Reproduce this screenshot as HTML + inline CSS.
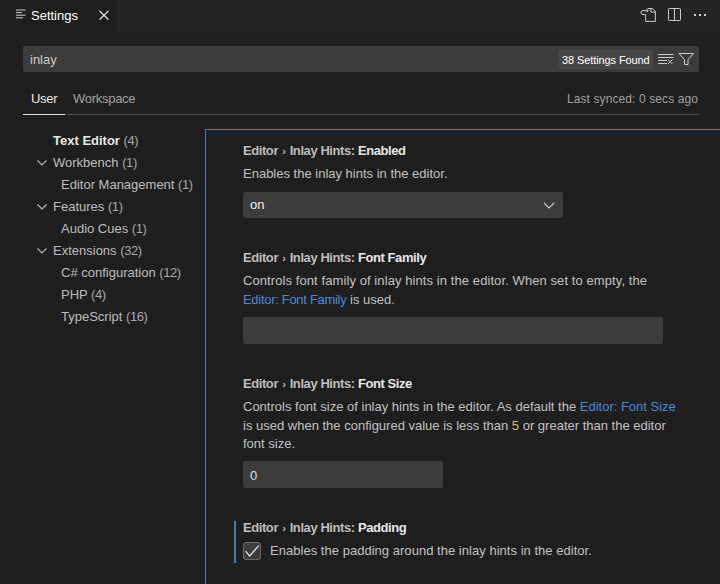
<!DOCTYPE html>
<html><head><meta charset="utf-8">
<style>
*{box-sizing:border-box;margin:0;padding:0}
html,body{width:720px;height:584px;overflow:hidden;background:#1e1e1e;font-family:"Liberation Sans",sans-serif;color:#cccccc;position:relative}
.a{position:absolute;white-space:nowrap}
#tabbar{left:0;top:0;width:720px;height:32px;background:#252526}
#tab{left:0;top:0;width:118px;height:32px;background:#1e1e1e}
.t13{font-size:13px;line-height:16px}
.title{font-size:13px;font-weight:bold;color:#bdbdbd;letter-spacing:-0.42px}
.title b{color:#e7e7e7}
.sep{font-size:11px;font-weight:bold;position:relative;top:-0.5px;padding:0 1px}
.desc{font-size:13px;color:#c2c2c2;line-height:18.5px}
.link{color:#4b8ad8}
.toc{font-size:13px;color:#bdbdbd}
.toc .n{color:#a8a8a8;letter-spacing:-0.4px}
.input{background:#3c3c3c;border-radius:2px}
</style></head><body>
<div class="a" id="tabbar"></div>
<div class="a" id="tab"></div>
<!-- tab icon -->
<svg class="a" style="left:15px;top:8px" width="12" height="12" viewBox="0 0 12 12">
<g fill="#cccccc"><rect x="1" y="1.5" width="9.5" height="1"/><rect x="1" y="4.1" width="6" height="1"/><rect x="1" y="6.7" width="9.5" height="1"/><rect x="1" y="9.3" width="7" height="1"/></g>
</svg>
<div class="a t13" style="left:31px;top:8px;color:#ffffff">Settings</div>
<!-- close -->
<svg class="a" style="left:98px;top:9px" width="12" height="12" viewBox="0 0 12 12">
<path d="M1.5 1.9L10.5 10.6M10.5 1.9L1.5 10.6" stroke="#ffffff" stroke-width="1.15"/>
</svg>
<!-- right icons -->
<svg class="a" style="left:636px;top:4px" width="26" height="22" viewBox="0 0 26 22">
<g fill="none" stroke="#cccccc" stroke-width="1">
<path d="M9.6 10V17.4H19.4V7.6L16.4 4.5H11.6"/>
<path d="M14.9 4.5V8.1H19.4"/>
<path d="M12 6.6H7A2 2 0 0 0 7 10.6H9.6"/>
<path d="M10.4 4.8L12.2 6.6L10.4 8.4"/>
</g>
</svg>
<svg class="a" style="left:666px;top:7px" width="17" height="16" viewBox="0 0 17 16">
<g fill="none" stroke="#cccccc" stroke-width="1">
<rect x="2.5" y="1.5" width="12" height="12" rx="0.8"/>
<path d="M8.5 1.5V13.5"/>
</g>
</svg>
<svg class="a" style="left:692px;top:12px" width="16" height="6" viewBox="0 0 16 6">
<g fill="#cccccc"><rect x="2" y="2" width="2" height="2"/><rect x="7" y="2" width="2" height="2"/><rect x="12" y="2" width="2" height="2"/></g>
</svg>

<!-- search -->
<div class="a input" style="left:23px;top:46px;width:676px;height:26px"></div>
<div class="a t13" style="left:30px;top:52px;color:#cccccc">inlay</div>
<div class="a" style="left:559px;top:50px;width:94px;height:19px;background:#474747;border-radius:2px"></div>
<div class="a" style="left:562px;top:53px;font-size:11px;line-height:14px;color:#ffffff;letter-spacing:-0.1px">38 Settings Found</div>
<svg class="a" style="left:657px;top:52px" width="18" height="14" viewBox="0 0 18 14">
<g stroke="#cccccc" stroke-width="1" fill="none">
<path d="M1 2.5H16.5M1 5.5H16.5M1 8.5H10M1 11.5H10M11 7.5L15.5 12M15.5 7.5L11 12"/>
</g>
</svg>
<svg class="a" style="left:677px;top:52px" width="18" height="14" viewBox="0 0 18 14">
<path d="M2 1.5H16.5L11 7.8V12.5H7.5V7.8Z" stroke="#cccccc" stroke-width="1" fill="none"/>
</svg>

<!-- user/workspace tabs -->
<div class="a t13" style="left:31px;top:91px;color:#e7e7e7;letter-spacing:-0.3px">User</div>
<div class="a t13" style="left:73px;top:91px;color:#a0a0a0;letter-spacing:-0.28px">Workspace</div>
<div class="a" style="left:23px;top:114px;width:676px;height:1px;background:#4a4a4a"></div>
<div class="a" style="left:23px;top:114px;width:42px;height:1px;background:#e7e7e7"></div>
<div class="a" style="right:22px;top:91px;font-size:12px;line-height:16px;color:#a0a0a0;letter-spacing:0.1px">Last synced: 0 secs ago</div>

<!-- TOC -->
<div class="a toc" style="left:53px;top:133px;line-height:16px"><b style="color:#e7e7e7">Text Editor</b> <span class="n">(4)</span></div>
<div class="a toc" style="left:53px;top:155px;line-height:16px">Workbench <span class="n">(1)</span></div>
<div class="a toc" style="left:61px;top:177px;line-height:16px">Editor Management <span class="n">(1)</span></div>
<div class="a toc" style="left:53px;top:199px;line-height:16px">Features <span class="n">(1)</span></div>
<div class="a toc" style="left:61px;top:221px;line-height:16px">Audio Cues <span class="n">(1)</span></div>
<div class="a toc" style="left:53px;top:243px;line-height:16px">Extensions <span class="n">(32)</span></div>
<div class="a toc" style="left:61px;top:265px;line-height:16px">C# configuration <span class="n">(12)</span></div>
<div class="a toc" style="left:61px;top:287px;line-height:16px">PHP <span class="n">(4)</span></div>
<div class="a toc" style="left:61px;top:309px;line-height:16px">TypeScript <span class="n">(16)</span></div>
<svg class="a" style="left:36px;top:158px" width="12" height="10" viewBox="0 0 12 10"><path d="M1.5 2.5L6 7L10.5 2.5" stroke="#bdbdbd" stroke-width="1.1" fill="none"/></svg>
<svg class="a" style="left:36px;top:202px" width="12" height="10" viewBox="0 0 12 10"><path d="M1.5 2.5L6 7L10.5 2.5" stroke="#bdbdbd" stroke-width="1.1" fill="none"/></svg>
<svg class="a" style="left:36px;top:246px" width="12" height="10" viewBox="0 0 12 10"><path d="M1.5 2.5L6 7L10.5 2.5" stroke="#bdbdbd" stroke-width="1.1" fill="none"/></svg>

<!-- focus border -->
<div class="a" style="left:205px;top:129px;width:515px;height:455px;border-left:1px solid #3f7fd2;border-top:1px solid #3f7fd2"></div>

<!-- setting 1 -->
<div class="a title" style="left:243px;top:143px;line-height:16px">Editor <span class="sep">›</span> Inlay Hints: <b>Enabled</b></div>
<div class="a desc" style="left:243px;top:165px">Enables the inlay hints in the editor.</div>
<div class="a input" style="left:243px;top:192px;width:320px;height:26px"></div>
<div class="a t13" style="left:250px;top:197px;color:#f0f0f0">on</div>
<svg class="a" style="left:542px;top:200px" width="14" height="10" viewBox="0 0 14 10"><path d="M2 3L7 8L12 3" stroke="#cccccc" stroke-width="1.1" fill="none"/></svg>

<!-- setting 2 -->
<div class="a title" style="left:243px;top:250px;line-height:16px">Editor <span class="sep">›</span> Inlay Hints: <b>Font Family</b></div>
<div class="a desc" style="left:243px;top:272px"><span style="letter-spacing:0.085px">Controls font family of inlay hints in the editor. When set to empty, the</span><br><span class="link" style="letter-spacing:-0.3px">Editor: Font Family</span> is used.</div>
<div class="a input" style="left:243px;top:317px;width:420px;height:27px"></div>

<!-- setting 3 -->
<div class="a title" style="left:243px;top:376px;line-height:16px">Editor <span class="sep">›</span> Inlay Hints: <b>Font Size</b></div>
<div class="a desc" style="left:243px;top:398px">Controls font size of inlay hints in the editor. As default the <span class="link">Editor: Font Size</span><br>is used when the configured value is less than <span style="color:#d7ba7d">5</span> or greater than the editor<br>font size.</div>
<div class="a input" style="left:243px;top:461px;width:200px;height:27px"></div>
<div class="a t13" style="left:250px;top:468px;color:#e0e0e0">0</div>

<!-- setting 4 -->
<div class="a" style="left:234px;top:521px;width:2px;height:42px;background:#3b80ab"></div>
<div class="a title" style="left:243px;top:520px;line-height:16px">Editor <span class="sep">›</span> Inlay Hints: <b>Padding</b></div>
<div class="a" style="left:243px;top:542px;width:18px;height:18px;background:#3c3c3c;border:1px solid #6a6a6a;border-radius:3px"></div>
<svg class="a" style="left:243px;top:542px" width="18" height="18" viewBox="0 0 18 18"><path d="M2.6 9.2L6.6 14L15.8 3.6" stroke="#e8e8e8" stroke-width="1.2" fill="none"/></svg>
<div class="a desc" style="left:270px;top:542px;letter-spacing:0.03px">Enables the padding around the inlay hints in the editor.</div>
</body></html>
